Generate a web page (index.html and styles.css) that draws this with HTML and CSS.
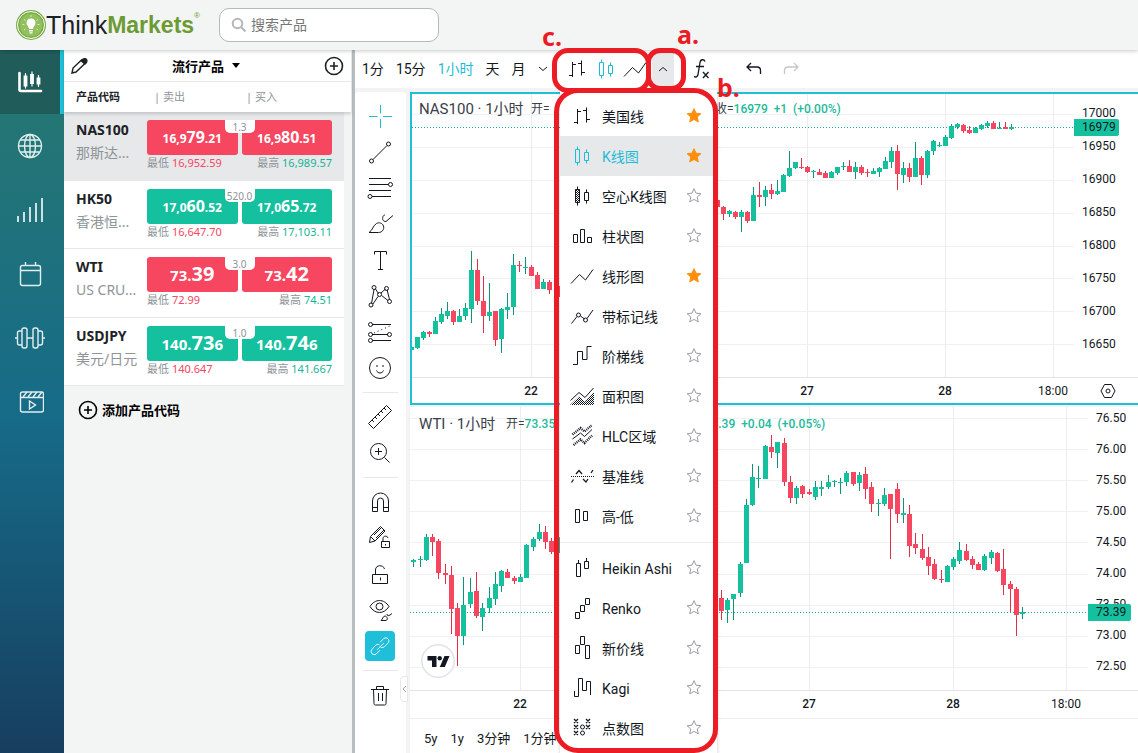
FILE: index.html
```html
<!DOCTYPE html>
<html lang="zh-CN">
<head>
<meta charset="utf-8">
<title>ThinkMarkets</title>
<link rel="stylesheet" href="styles.css">
</head>
<body>
<svg class="sprite" aria-hidden="true">
  <defs>
    <pattern id="dots" width="2" height="2" patternUnits="userSpaceOnUse"><path d="M0 0h1v1H0zM1 1h1v1H1z" fill="#131722" stroke="none"/></pattern>
  </defs>
  <symbol id="i-bars" viewBox="0 0 28 28"><path d="M9.500 7v15M6 20.500h3.500M9.500 9.500H13M18.500 5.500v15M15 8.500h3.500M18.500 17.500H22"/></symbol>
  <symbol id="i-candles" viewBox="0 0 28 28"><path d="M7.500 7.500h4v13h-4zM9.500 4.500v3M9.500 20.500v3M16.500 10.500h4v8h-4zM18.500 7.500v3M18.500 18.500v3"/></symbol>
  <symbol id="i-hollow" viewBox="0 0 28 28"><path fill="url(#dots)" d="M7.500 7.500h4v13h-4z"/><path d="M9.500 4.500v3M9.500 20.500v3M16.500 10.500h4v8h-4zM18.500 7.500v3M18.500 18.500v3"/></symbol>
  <symbol id="i-columns" viewBox="0 0 28 28"><path d="M5.500 12.500h4v8h-4zM12.500 7.500h4v13h-4zM19.500 15.500h4v5h-4z"/></symbol>
  <symbol id="i-line" viewBox="0 0 28 28"><path d="M3 21.500l8.500-9 6 5.500L25 7.500"/></symbol>
  <symbol id="i-markers" viewBox="0 0 28 28"><path d="M3.500 21.500l5.500-7M12.500 14l4 3M19 16.500l6-8.500"/><circle cx="10.500" cy="13" r="2"/><circle cx="17.500" cy="18" r="2"/></symbol>
  <symbol id="i-step" viewBox="0 0 28 28"><path d="M5 22.500h4.500v-13h5v8h4.500V4.500h4.500"/></symbol>
  <symbol id="i-area" viewBox="0 0 28 28"><path fill="url(#dots)" stroke="none" d="M2 23l9-8.500 6 5L26 10v13z"/><path d="M2.500 18.500l8.500-8 6 5 8.500-9.500"/></symbol>
  <symbol id="i-hlc" viewBox="0 0 28 28"><path d="M4.500 17l8-6 4 3.500 7.500-7"/><path stroke-width="2.400" stroke-dasharray="1 1" d="M4.500 12.500l8-6.500 4 3.500 7-6M5.500 23l7-5.500 4 3.500 7.500-7.500"/></symbol>
  <symbol id="i-base" viewBox="0 0 28 28"><path stroke-dasharray="1 1" d="M3 14.500h23"/><path stroke-width="1.300" d="M3.500 20.500l2-3M8 12l3-3.500 3 3.500M15 17l3 3 2-3M23 11l2-3"/></symbol>
  <symbol id="i-hilo" viewBox="0 0 28 28"><path d="M7.500 7.500h4v13h-4zM15.500 9.500h4v9h-4z"/></symbol>
  <symbol id="i-heikin" viewBox="0 0 28 28"><path d="M8.500 9.500h4v13h-4zM10.500 6v3.500M16.500 7.500h4v7h-4zM18.500 4v3.500"/></symbol>
  <symbol id="i-renko" viewBox="0 0 28 28"><path d="M7.500 18.500h4v6h-4zM12.500 11.500h4v6h-4zM17.500 4.500h4v6h-4z"/></symbol>
  <symbol id="i-break" viewBox="0 0 28 28"><path d="M7.500 11.500h4v8h-4zM12.500 2.500h4v8h-4zM17.500 11.500h4v13h-4z"/></symbol>
  <symbol id="i-kagi" viewBox="0 0 28 28"><path d="M6.500 17v5.500h4V4.500h4v12h4v-9h4V21"/></symbol>
  <symbol id="i-pf" viewBox="0 0 28 28"><path stroke-width="1.300" d="M6 5l4 4M10 5l-4 4M18 5l4 4M22 5l-4 4M6 11l4 4M10 11l-4 4M18 11l4 4M22 11l-4 4M6 17l4 4M10 17l-4 4"/><circle cx="14.500" cy="13" r="2"/><circle cx="14.500" cy="19" r="2"/></symbol>
  <symbol id="i-star" viewBox="0 0 18 18"><path d="M9 1.700l2 4.500 4.900.5-3.700 3.300 1.100 4.900L9 12.400l-4.300 2.500 1.100-4.900L2.100 6.700 7 6.200z"/></symbol>
  <symbol id="t-cross" viewBox="0 0 28 28"><path d="M3 14.500h8.500M17 14.500h9M14.500 3v8.500M14.500 17v9"/></symbol>
  <symbol id="t-trend" viewBox="0 0 28 28"><path d="M7 21.500L21 7.500"/><circle cx="5.500" cy="23" r="2"/><circle cx="22.500" cy="6" r="2"/></symbol>
  <symbol id="t-fib" viewBox="0 0 28 28"><path d="M3 4.500h22M3 10.500h19.500M3 16.500h22M6 22.500h19"/><circle cx="24.500" cy="10.500" r="2"/><circle cx="4" cy="22.500" r="2"/></symbol>
  <symbol id="t-brush" viewBox="0 0 28 28"><path d="M3 22.500h9.500c3.500 0 6-3 5-6.500-1-3-4.500-4-7-2.500-4 2.500-3.500 6.500-7.500 9zM17 6.500c-1 3 0 5 3 5M20 11.500l7-6M17 6.500c.5-1 1-1.500 2-1.500"/></symbol>
  <symbol id="t-text" viewBox="0 0 28 28"><path d="M8.500 8.500v-3h12v3M14.500 5.500v18M12 23.500h5"/></symbol>
  <symbol id="t-pattern" viewBox="0 0 28 28"><path d="M5.500 21.500l2.500-14M9.500 7l3 4.500M15 11l4.500-4M21 7.500l2.500 10M7 22l5-7.500M15.500 13.500l6.500 5"/><circle cx="8" cy="5.500" r="2"/><circle cx="20.500" cy="6.500" r="2"/><circle cx="13.500" cy="12.500" r="2"/><circle cx="5" cy="23" r="2"/><circle cx="23.500" cy="19.500" r="2"/></symbol>
  <symbol id="t-forecast" viewBox="0 0 28 28"><path d="M6 6.500h19M6 16.500h16M6 22.500h19"/><path stroke-dasharray="1 3" d="M8 15l16-7"/><circle cx="4.500" cy="6.500" r="2"/><circle cx="4.500" cy="16.500" r="2"/><circle cx="23.500" cy="16.500" r="2"/><circle cx="4.500" cy="22.500" r="2"/></symbol>
  <symbol id="t-smile" viewBox="0 0 28 28"><circle cx="14" cy="14" r="10.500"/><path d="M10.500 16.500c.5 1.500 2 2.500 3.500 2.500s3-1 3.500-2.500M11 11v2M17 11v2"/></symbol>
  <symbol id="t-ruler" viewBox="0 0 28 28"><path d="M2.500 20.500l18-18 5 5-18 18zM6 17l2 2M9 14l2 2M12 11l2 2M15 8l2 2M18 5l2 2"/></symbol>
  <symbol id="t-zoom" viewBox="0 0 28 28"><circle cx="12.500" cy="12.500" r="8"/><path d="M18.500 18.500l5 5M12.500 9v7M9 12.500h7"/></symbol>
  <symbol id="t-magnet" viewBox="0 0 28 28"><path d="M6.500 23.500V13a8 8 0 0 1 16 0v10.500h-5V13a3 3 0 0 0-6 0v10.500zM6.500 19.500h5M17.500 19.500h5"/></symbol>
  <symbol id="t-penlock" viewBox="0 0 28 28"><path d="M3.500 18.500l1-6 10-10 4.500 4.500-10 10zM5 13l4 4M8 11l7.500-7.500M10 14l8-8M15.500 17.500h8v6h-8zM17 17v-2.500c0-3 4.500-3 5-.5M19.500 20v1.500"/></symbol>
  <symbol id="t-lock" viewBox="0 0 28 28"><path d="M6.500 14.500h15v9h-15zM9.500 14.500V10c0-5.500 8-5.500 9-1M14.500 17.500v3"/></symbol>
  <symbol id="t-eye" viewBox="0 0 28 28"><path d="M4 10.500c5-8 14-8 19 0-5 8-14 8-19 0zM15 24.500h5c2.500-1 1-4.500-1-4.500-2.500.5-2 3-4 4.500zM21 18c0 2 1.500 2 3 1l2-1.500"/><circle cx="13.500" cy="10.500" r="3.500"/></symbol>
  <symbol id="t-link" viewBox="0 0 28 28"><path d="M11 18l7-7M14 10l4-4c3.500-2.500 7 1.500 5 4.500l-4.500 4.500c-1.500 1-3 1-4 0M14 18.500l-4 4c-3.500 2.500-7-1.500-5-4.500L9.500 13c1.500-1 3-1 4 0"/></symbol>
  <symbol id="t-trash" viewBox="0 0 28 28"><path d="M5 8.500h18M10.500 8.500v-3h7v3M7.500 8.500l.5 14c0 1 .5 1.500 1.500 1.500h9c1 0 1.500-.5 1.500-1.500l.5-14M12.500 12v8M16.500 12v8"/></symbol>
</svg>

<header class="top">
  <div class="logo">
    <svg class="logo-mark" viewBox="0 0 30 30"><circle cx="15" cy="15" r="15" fill="#79ab43"/><circle cx="15" cy="15" r="13.500" fill="none" stroke="#fff" stroke-width="1"/><circle cx="15" cy="15" r="11.500" fill="#92c05d"/><path d="M15 8.500c-3 0-4.500 2-4.500 4.500s2.300 3.500 2.500 6h4c.2-2.500 2.500-3.500 2.500-6S18 8.500 15 8.500zM13 20h4v1.500h-4zM13.500 22.200h3v1.300h-3z" fill="#fff"/><path d="M8 9.500l1.500 1M6.500 14.500h2M8 20l1.500-1M22 9.500l-1.500 1M23.500 14.500h-2M22 20l-1.500-1M15 5v2" stroke="#d8eabf"/></svg>
    <span class="logo-think">Think</span><span class="logo-markets">Markets</span><span class="logo-reg">®</span>
  </div>
  <label class="search">
    <svg viewBox="0 0 16 16" class="search-icon"><circle cx="6.500" cy="6.500" r="4.800"/><path d="M10.200 10.200l4.300 4.300"/></svg>
    <input type="text" placeholder="搜索产品" aria-label="搜索产品">
  </label>
</header>

<div class="app">
  <nav class="rail">
    <a href="#" class="rail-item active" aria-label="交易"><svg viewBox="0 0 28 28"><path stroke-width="2.600" stroke-linecap="round" d="M3.500 5v16.500a1.500 1.500 0 0 0 1.500 1.500h20"/><path stroke-width="3.800" d="M9.500 7.500v11M16 6v10M22.500 9.500v7"/><path stroke-width="1.200" d="M9.500 5v15.500M16 3.500v15M22.500 7v12"/></svg></a>
    <a href="#" class="rail-item" aria-label="市场"><svg viewBox="0 0 28 28"><circle cx="14" cy="14" r="11.500"/><ellipse cx="14" cy="14" rx="5.500" ry="11.500"/><path d="M2.500 14h23M4.500 8h19M4.500 20h19M14 2.500v23"/></svg></a>
    <a href="#" class="rail-item" aria-label="信号"><svg viewBox="0 0 28 28"><path stroke-width="1.800" d="M2 20v6M8 16v10M14 11v15M20 7v19M26 2v24"/></svg></a>
    <a href="#" class="rail-item" aria-label="日历"><svg viewBox="0 0 28 28"><rect x="4.500" y="5.500" width="20" height="20" rx="2"/><path d="M4.500 10.500h20M9.500 2v3.500M19.500 2v3.500"/></svg></a>
    <a href="#" class="rail-item" aria-label="训练"><svg class="wide" viewBox="0 0 30 28"><rect x="7" y="4" width="5" height="20" rx="2"/><rect x="18" y="4" width="5" height="20" rx="2"/><path d="M12 14h6M7 7H4.500C3 7 2.500 8 2.500 9v10c0 1 .5 2 2 2H7M23 7h2.500c1.500 0 2 1 2 2v10c0 1-.5 2-2 2H23M0 14h2.500M27.500 14H30"/></svg></a>
    <a href="#" class="rail-item" aria-label="视频"><svg viewBox="0 0 28 28"><rect x="4.500" y="4" width="23" height="20" rx="2"/><path d="M4.500 9.500h23M7 9l4-5M12 9l4-5M17 9l4-5M22 9l4-5M13.500 13v8l6-4z"/></svg></a>
  </nav>

  <aside class="watch">
    <div class="watch-head">
      <div class="watch-title">
        <button aria-label="编辑"><svg viewBox="0 0 18 18" class="pencil"><path d="M2 16l1-5L11.500 3l3.500 3.500-9 8.500z"/><path fill="#1c2226" d="M11.500 4c1-2.500 4-3 5-1.500s0 3.500-1.500 4.500z"/></svg></button>
        <button class="list-name">流行产品<span class="caret"></span></button>
        <button aria-label="添加"><svg viewBox="0 0 20 20" class="plus"><circle cx="10" cy="10" r="8.500"/><path d="M10 6v8M6 10h8"/></svg></button>
      </div>
      <div class="watch-cols"><strong>产品代码</strong><span>| 卖出</span><span>| 买入</span></div>
    </div>
    <ul class="quotes">
      <li class="quote sel">
        <div class="sym"><b>NAS100</b><span>那斯达...</span></div>
        <div class="deal down">
          <button>16,9<big>79</big>.21</button><button>16,9<big>80</big>.51</button><i>1.3</i>
          <small>最低 <em class="r">16,952.59</em></small><small>最高 <em class="g">16,989.57</em></small>
        </div>
      </li>
      <li class="quote">
        <div class="sym"><b>HK50</b><span>香港恒...</span></div>
        <div class="deal up">
          <button>17,0<big>60</big>.52</button><button>17,0<big>65</big>.72</button><i>520.0</i>
          <small>最低 <em class="r">16,647.70</em></small><small>最高 <em class="g">17,103.11</em></small>
        </div>
      </li>
      <li class="quote">
        <div class="sym"><b>WTI</b><span>US CRU...</span></div>
        <div class="deal down large">
          <button>73.<big>39</big></button><button>73.<big>42</big></button><i>3.0</i>
          <small>最低 <em class="r">72.99</em></small><small>最高 <em class="g">74.51</em></small>
        </div>
      </li>
      <li class="quote">
        <div class="sym"><b>USDJPY</b><span>美元/日元</span></div>
        <div class="deal up large">
          <button>140.<big>73</big>6</button><button>140.<big>74</big>6</button><i>1.0</i>
          <small>最低 <em class="r">140.647</em></small><small>最高 <em class="g">141.667</em></small>
        </div>
      </li>
    </ul>
    <button class="add"><svg viewBox="0 0 20 20" class="plus"><circle cx="10" cy="10" r="8.500"/><path d="M10 6v8M6 10h8"/></svg>添加产品代码</button>
  </aside>

  <main class="work">
    <div class="bar">
      <button class="p">1分</button><button class="p">15分</button><button class="p on">1小时</button><button class="p">天</button><button class="p">月</button>
      <button class="more" aria-label="更多周期"><svg viewBox="0 0 10 6"><path d="M1 1l4 3.500L9 1"/></svg></button>
      <button class="ic" aria-label="美国线"><svg class="ico"><use href="#i-bars"/></svg></button>
      <button class="ic on" aria-label="K线图"><svg class="ico"><use href="#i-candles"/></svg></button>
      <button class="ic" aria-label="线形图"><svg class="ico"><use href="#i-line"/></svg></button>
      <button class="open" aria-label="图表类型"><svg viewBox="0 0 10 6"><path d="M1 5l4-3.500L9 5"/></svg></button>
      <button class="fx" aria-label="指标"><svg viewBox="0 0 28 28" class="ico"><path stroke-width="1.300" d="M17 6.500c-1-2.500-4.500-2.500-5 1l-2 12c-.5 2.500-2.500 3-4 2M8 11.500h8M15 17l5.500 6M20.500 17L15 23"/></svg></button>
      <button class="undo" aria-label="撤销"><svg viewBox="0 0 28 28" class="ico"><path stroke-width="1.300" d="M11 8l-4 4 4 4M7.500 12H17c2 0 3.500 1.500 3.500 3.500V19"/></svg></button>
      <button class="redo" aria-label="重做"><svg viewBox="0 0 28 28" class="ico"><path stroke-width="1.300" d="M17 8l4 4-4 4M20.500 12H11c-2 0-3.500 1.500-3.500 3.500V19"/></svg></button>
    </div>
    <div class="body">
      <div class="tools" id="tools"></div>
      <div class="charts">
        <section class="chart chart-a">
          <div class="legend"><span class="name">NAS100 · <span>1小时</span></span><span class="ohlc">开=</span><span>收=<b>16979&nbsp; +1 &nbsp;(+0.00%)</b></span></div>
          <svg class="pane" id="paneA"></svg>
          <div class="prices"><span>17000</span><span>16950</span><span>16900</span><span>16850</span><span>16800</span><span>16750</span><span>16700</span><span>16650</span><mark>16979</mark></div>
          <svg class="times" id="timesA"></svg>
          <button class="gear" aria-label="设置"><svg viewBox="0 0 16 16"><path d="M4.500 1.500h7l3.500 6.500-3.500 6.500h-7L1 8z"/><circle cx="8" cy="8" r="2"/></svg></button>
        </section>
        <section class="chart chart-b">
          <div class="legend"><span class="name">WTI · <span>1小时</span></span><span class="ohlc">开=<b>73.35</b></span><span>收=<b>73.39&nbsp; +0.04 &nbsp;(+0.05%)</b></span></div>
          <svg class="pane" id="paneB"></svg>
          <div class="prices"><span>76.50</span><span>76.00</span><span>75.50</span><span>75.00</span><span>74.50</span><span>74.00</span><span>73.50</span><span>73.00</span><span>72.50</span><mark>73.39</mark></div>
          <svg class="times" id="timesB"></svg>
          <svg class="tv" viewBox="0 0 34 34"><circle cx="17" cy="17" r="16.200" fill="#fff" stroke="#e0e3eb" stroke-width="1.500"/><path fill="#131722" d="M6.500 12h9v11h-4.500v-6.500H6.500zM23.500 12h5l-4.700 11h-5z"/><circle cx="18.700" cy="14.200" r="2.200" fill="#131722"/></svg>
        </section>
        <div class="ranges"><button>5y</button><button>1y</button><button>3分钟</button><button>1分钟</button></div>
        <button class="fold" aria-label="收起"><svg viewBox="0 0 5 8"><path d="M4 1L1 4l3 3"/></svg></button>
      </div>
    </div>
    <div class="menu" id="menu"></div>
  </main>
</div>

<div class="note note-c"></div><div class="note note-a"></div><div class="note note-b"></div>
<span class="tag tag-c">c.</span><span class="tag tag-a">a.</span><span class="tag tag-b">b.</span>
<script src="app.js"></script>
</body>
</html>
```
FILE: styles.css
```css
* { box-sizing: border-box; }
body { margin: 0; height: 100vh; display: flex; flex-direction: column; overflow: hidden; position: relative; background: #f3f5f4; color: #1c2226; font: 14px/20px "Noto Sans", "Noto Sans CJK SC", sans-serif; }
button { margin: 0; padding: 0; border: 0; background: none; color: inherit; font: inherit; cursor: pointer; }
svg { display: block; fill: none; stroke: currentColor; }
.sprite { position: absolute; width: 0; height: 0; }
.ico { width: 28px; height: 28px; flex: none; }

.top { height: 50px; flex: none; display: flex; align-items: center; padding-left: 16px; gap: 20px; box-shadow: 0 1px 4px rgba(0,0,0,.22); position: relative; z-index: 3; background: #f3f5f4; }
.logo { display: flex; align-items: center; width: 183px; font: 25px/30px "Liberation Sans", Arial, sans-serif; color: #1b2025; }
.logo-mark { width: 30px; height: 30px; stroke: none; flex: none; }
.logo-markets { font-weight: 700; font-size: 23px; color: #6c9a33; }
.logo-reg { align-self: flex-start; font-size: 8px; line-height: 12px; color: #6c9a33; }
.search { display: flex; align-items: center; gap: 2px; width: 220px; height: 34px; padding-left: 11px; border: 1px solid #b4b9ba; border-radius: 10px; background: #fff; }
.search-icon { width: 16px; height: 16px; color: #b4b8ba; stroke-width: 2; flex: none; }
.search input { flex: 1; min-width: 0; border: 0; outline: 0; background: none; font: inherit; }
.search input::placeholder { color: #777; opacity: 1; }

.app { flex: 1; min-height: 0; display: flex; }
.rail { width: 64px; flex: none; background: linear-gradient(#247674 64px, #166b88 370px, #173e5f); }
.rail-item { display: flex; align-items: center; justify-content: center; height: 64px; border-right: 4px solid transparent; color: #e2eeee; }
.rail-item svg { width: 28px; height: 28px; stroke-width: 1.4; }
.rail-item .wide { width: 30px; }
.rail-item.active { background: #205c59; border-color: #1fc0d9; color: #fff; }

.watch { width: 291px; flex: none; padding-right: 1px; border-right: 3px solid #b8bdc0; }
.watch-head { height: 62px; background: #fff; box-shadow: 0 2px 3px rgba(0,0,0,.16); position: relative; }
.watch-title { height: 32px; display: flex; align-items: center; justify-content: space-between; padding: 0 7px 0 6px; border-bottom: 1px solid #e6e8e9; }
.pencil { width: 18px; height: 18px; stroke-width: 1.4; }
.plus { width: 20px; height: 20px; stroke-width: 1.6; flex: none; }
.list-name { display: flex; align-items: center; gap: 8px; color: #000; font-size: 13px; font-weight: 700; }
.caret { border: 4px solid transparent; border-top: 5px solid #000; border-bottom: 0; }
.watch-cols { display: grid; grid-template-columns: 78px 92px 1fr; padding: 5px 0 0 12px; font-size: 11px; color: #8e9498; }
.watch-cols strong { color: #1c2226; }
.quotes { list-style: none; margin: 0; padding: 0; width: 280px; }
.quote { height: 69px; display: flex; padding: 8px 12px 0; background: #fff; border-bottom: 1px solid #e6e8e9; }
.quote:nth-child(even) { height: 68px; }
.quote.sel { background: #e6e8ea; }
.sym { width: 71px; flex: none; white-space: nowrap; display: flex; flex-direction: column; gap: 4px; }
.sym span { color: #8e9498; line-height: 18px; }
.deal { flex: 1; position: relative; display: grid; grid-template-columns: 1fr 1fr; column-gap: 4px; align-content: start; }
.deal button { height: 35px; border-radius: 3px; color: #fff; font-weight: 700; font-size: 12px; line-height: 20px; }
.deal big { font-size: 16px; }
.deal.large button { font-size: 15px; }
.deal.large big { font-size: 20px; }
.down button { background: #f7465f; }
.up button { background: #15c09f; }
.deal i { position: absolute; left: 50%; top: 0; transform: translateX(-50%); width: 30px; height: 13px; border-radius: 0 0 5px 5px; background: #fff; color: #8e9498; font: 10px/14px "Noto Sans", sans-serif; text-align: center; }
.deal small { font-size: 11px; line-height: 16px; color: #8e9498; white-space: nowrap; }
.deal small:last-child { text-align: right; }
.deal em { font-style: normal; }
.r { color: #f7465f; }
.g { color: #15b598; }
.add { display: flex; align-items: center; gap: 4px; margin: 14px 0 0 14px; color: #000; font-size: 13px; font-weight: 700; }

.work { flex: 1; min-width: 0; display: flex; flex-direction: column; position: relative; font-family: Roboto, "Noto Sans CJK SC", sans-serif; color: #131722; background: #f3f3f3; }
.bar { height: 38px; flex: none; display: flex; align-items: center; padding-left: 7px; background: #fff; }
.bar .p { margin-right: 12px; white-space: nowrap; }
.bar .on { color: #1fbcd6; }
.more svg, .open svg { width: 10px; height: 6px; }
.more { margin: 0 15px 0 0; }
.bar .ic { width: 29px; }
.open { width: 22px; height: 36px; margin-left: 2px; display: flex; align-items: center; justify-content: center; background: #e6e8ea; }
.fx { margin-left: 14px; }
.undo { margin-left: 24px; }
.redo { margin-left: 9px; color: #c4c7cc; }
.body { flex: 1; min-height: 0; display: flex; gap: 4px; padding-top: 4px; }
.tools { width: 51px; flex: none; padding: 6px 2px 0 0; background: #fff; border-radius: 4px 4px 0 0; }
.tool { width: 100%; height: 36px; display: flex; align-items: center; justify-content: center; }
.tool.cross { color: #1fbcd6; }
.tool.link .ico { width: 30px; height: 30px; padding: 2px; border-radius: 4px; background: #1fbfd9; color: #fff; }
.tools hr { height: 1px; margin: 6px 6px 6px 8px; border: 0; background: #e6e8e9; }
.charts { flex: 1; min-width: 0; display: flex; flex-direction: column; position: relative; }
.chart { position: relative; display: grid; overflow: hidden; background: #fff; }
.chart-a { height: 313px; grid-template: 1fr 25px / 1fr 64px; border: 2px solid #1fbfd9; border-right: 0; margin-bottom: 2px; }
.chart-b { height: 311px; grid-template: 1fr 27px / 1fr 50px; }
.pane { width: 100%; height: 100%; border-bottom: 1px solid #e0e3eb; stroke: none; overflow: hidden; }
.times { width: 100%; height: 25px; stroke: none; overflow: visible; }
.times text { fill: #131722; font: 12px Roboto, sans-serif; text-anchor: middle; }
.times .day { font-weight: 500; }
.legend { position: absolute; left: 7px; top: 4px; display: flex; font-size: 12px; line-height: 22px; white-space: nowrap; color: #3a3e49; }
.chart-b .legend { left: 9px; top: 6px; }
.legend b { font-weight: 500; color: #22b99c; }
.legend .name { width: 112px; font-size: 15px; }
.legend .ohlc { width: 184px; }
.chart-b .legend .name { width: 87px; }
.chart-b .legend .ohlc { width: 180px; }
.prices { position: relative; border-bottom: 1px solid #e0e3eb; padding: 3px 0 0 8px; display: flex; flex-direction: column; font-size: 12px; line-height: 33px; }
.chart-b .prices { line-height: 31px; padding-top: 0; margin-top: -4px; }
.prices mark { position: absolute; left: 0; top: 25px; width: 45px; padding-left: 8px; line-height: 17px; border-radius: 0 2px 2px 0; background: #15c09f; color: #0c1a1c; }
.chart-b .prices mark { top: 201px; width: 43px; }
.gear { display: flex; align-items: center; justify-content: center; padding-left: 4px; }
.gear svg { width: 16px; height: 16px; }
.tv { position: absolute; left: 11px; top: 237px; width: 34px; height: 34px; stroke: none; }
.ranges { flex: 1; border-top: 1px solid #eceeef; background: #fff; display: flex; align-items: center; gap: 13px; padding: 6px 0 0 14px; font-size: 13px; }
.fold { position: absolute; left: -10px; top: 584px; width: 8px; height: 26px; display: flex; align-items: center; justify-content: center; background: #fff; border: 1px solid #e6e8e9; border-radius: 4px 0 0 4px; color: #9aa9b0; }
.fold svg { width: 5px; height: 8px; }

.menu { position: absolute; left: 205px; top: 40px; width: 157px; height: 670px; padding-top: 6px; background: #fff; box-shadow: 0 2px 4px rgba(0,0,0,.2); z-index: 2; }
.item { height: 40px; display: flex; align-items: center; width: 100%; padding: 0 14px 0 8px; text-align: left; }
.item.on { background: #e6e8ea; color: #1fbcd6; }
.item span { flex: 1; padding: 2px 0 0 6px; white-space: nowrap; }
.star { width: 18px; height: 18px; color: #9a9ea5; flex: none; }
.star.fav { fill: #ff8f0a; color: #ff8f0a; }
.menu hr { height: 1px; margin: 6px 0 5px; border: 0; background: #e8eaec; }

.note { position: absolute; z-index: 5; border: 5px solid #ec1c24; pointer-events: none; }
.note-c { left: 552px; top: 48px; width: 99px; height: 45px; border-radius: 16px; }
.note-a { left: 646px; top: 48px; width: 40px; height: 43px; border-radius: 14px; }
.note-b { left: 554px; top: 88px; width: 164px; height: 665px; border-radius: 24px; }
.tag { position: absolute; z-index: 6; color: #ec1c24; font: 700 25px/24px "Noto Sans", sans-serif; }
.tag-c { left: 542px; top: 24px; }
.tag-a { left: 677px; top: 22px; }
.tag-b { left: 717px; top: 75px; }
```
FILE: app.js
```js
const icons = [
  ['i-bars', '美国线', 1], ['i-candles', 'K线图', 1], ['i-hollow', '空心K线图'], ['i-columns', '柱状图'],
  ['i-line', '线形图', 1], ['i-markers', '带标记线'], ['i-step', '阶梯线'], ['i-area', '面积图'],
  ['i-hlc', 'HLC区域'], ['i-base', '基准线'], ['i-hilo', '高-低'], null,
  ['i-heikin', 'Heikin Ashi'], ['i-renko', 'Renko'], ['i-break', '新价线'], ['i-kagi', 'Kagi'], ['i-pf', '点数图']
];
document.getElementById('menu').innerHTML = icons.map(i => i
  ? `<button class="item${i[0] === 'i-candles' ? ' on' : ''}"><svg class="ico"><use href="#${i[0]}"/></svg><span>${i[1]}</span><svg class="star${i[2] ? ' fav' : ''}"><use href="#i-star"/></svg></button>`
  : '<hr>').join('');

document.getElementById('tools').innerHTML =
  'cross trend fib brush text pattern forecast smile | ruler zoom | magnet penlock lock eye link | trash'
    .split(' ').map(t => t === '|' ? '<hr>' : `<button class="tool ${t}" aria-label="${t}"><svg class="ico"><use href="#t-${t}"/></svg></button>`).join('');

// Candle: x, body top, body bottom, wick top, wick bottom, direction
const nas = `411 347 350 347 350 g;417 337 348 337 349 g;423 332 338 331 340 g;429 332 334 331 337 r;435 321 334 317 334 g;441 314 322 308 324 g;447 311 316 302 319 g;453 311 322 310 325 r;459 316 322 309 322 g;465 308 316 303 320 g;471 270 309 251 323 g;477 270 301 259 305 r;483 301 316 276 333 r;489 312 316 283 321 g;495 311 340 311 346 r;501 309 339 308 353 g;507 307 310 293 319 g;513 265 307 254 315 g;519 265 266 261 272 r;525 267 268 257 274 g;531 267 276 265 276 r;537 275 289 272 289 r;543 282 289 279 289 g;549 282 290 280 294 r;561 286 297 286 297 r;717 200 207 200 207 r;723 207 214 206 220 r;729 211 214 210 217 g;735 212 217 211 219 r;741 212 217 210 232 g;747 212 221 211 223 r;753 195 221 187 221 g;759 195 197 182 207 r;765 190 197 186 206 g;771 190 194 184 199 r;777 191 194 180 195 g;783 175 192 174 192 g;789 168 176 151 177 g;795 162 168 162 169 g;801 167 168 158 169 r;807 167 172 166 173 r;813 171 172 170 178 g;819 172 175 169 175 r;825 173 178 171 178 r;831 172 178 171 178 g;837 167 173 167 175 g;843 166 167 162 170 g;849 166 172 160 172 r;855 167 172 162 179 g;861 167 173 165 175 r;867 172 173 169 177 r;873 171 174 168 174 g;879 168 172 167 177 g;885 161 169 157 169 g;891 151 162 147 168 g;897 151 174 145 190 r;903 168 175 162 183 g;909 168 177 163 182 r;915 158 177 142 177 g;921 158 175 156 185 r;927 151 175 150 178 g;933 141 151 140 155 g;939 145 146 142 147 g;945 137 146 135 146 g;951 126 138 124 139 g;957 124 127 123 129 g;963 125 131 124 133 r;969 130 133 126 134 r;975 128 133 127 133 g;981 125 129 124 130 g;987 123 126 121 128 g;993 123 129 121 129 r;999 128 129 122 129 g;1005 127 129 122 129 r;1011 127 129 124 130 g`;
const wti = `413 560 562 559 567 g;420 559 560 556 567 g;426 537 560 534 561 g;432 537 542 534 556 r;438 541 573 539 579 r;445 573 575 564 584 r;451 575 609 566 634 r;457 608 636 603 666 r;463 605 636 577 645 g;470 592 604 578 608 g;476 591 616 572 618 r;482 608 617 603 631 g;489 598 608 587 613 g;495 584 599 572 605 g;501 571 586 570 592 g;507 572 578 569 578 r;514 578 581 576 584 r;520 577 582 574 582 g;526 545 578 544 578 g;533 539 547 537 551 g;539 532 539 524 541 g;545 532 542 526 549 r;551 541 552 538 554 r;558 537 553 535 553 g;721 598 611 590 620 r;727 600 610 598 623 g;733 594 599 594 620 g;740 564 593 562 597 g;746 505 563 499 563 g;752 477 505 464 506 g;758 478 479 466 488 g;765 446 479 445 479 g;771 447 452 435 458 r;777 442 453 442 468 g;784 443 482 438 486 r;790 482 498 476 503 r;796 488 498 486 504 g;802 486 494 485 498 r;809 492 494 489 495 r;815 487 497 481 500 g;821 487 489 481 496 g;828 482 487 475 489 g;834 481 482 480 487 g;840 482 483 478 494 g;846 473 482 471 486 g;853 472 484 472 486 r;859 475 483 472 491 g;865 474 489 467 499 r;871 487 504 482 512 r;878 503 504 499 516 g;884 495 504 488 506 g;890 494 509 494 559 r;897 489 514 483 523 r;903 513 515 498 523 g;909 514 546 505 557 r;915 544 548 533 554 r;922 549 558 534 560 r;928 557 566 547 575 r;934 564 579 559 580 r;941 579 580 570 583 r;947 566 582 565 582 g;953 559 567 557 570 g;959 550 561 542 564 g;966 551 560 544 561 r;972 559 565 556 569 r;978 564 570 562 570 r;984 556 570 554 571 g;991 552 558 550 564 g;997 553 571 552 572 r;1003 569 585 549 595 r;1010 584 589 581 612 r;1016 589 615 587 636 r;1022 612 614 607 619 g`;

function draw(id, data, ox, oy, rows, cols, last) {
  let s = '';
  rows.forEach(y => { s += `<rect x="0" y="${y - oy}" width="100%" height="1" fill="#f0f1f2"/>`; });
  cols.forEach(c => { s += `<rect x="${c[0] - ox}" y="0" width="1" height="100%" fill="#ecedef"/>`; });
  const y = last - oy + 0.5;
  s += `<line x1="0" x2="100%" y1="${y}" y2="${y}" stroke="#15a68b" stroke-dasharray="1 2"/>`;
  data.split(';').forEach(row => {
    const [x, a, b, h, l, d] = row.split(' ');
    const up = d === 'g';
    s += `<rect x="${x - ox}" y="${h - oy}" width="1" height="${l - h}" fill="${up ? '#0b9479' : '#e02f49'}"/>`;
    s += `<rect x="${x - ox - 2}" y="${a - oy}" width="5" height="${Math.max(1, b - a)}" fill="${up ? '#15c09f' : '#f7465f'}"/>`;
  });
  document.getElementById('pane' + id).innerHTML = s;
  document.getElementById('times' + id).innerHTML = cols.map(c =>
    `<text x="${c[0] - ox}" y="17"${c[1].length < 3 ? ' class="day"' : ''}>${c[1]}</text>`).join('');
}
draw('A', nas, 412, 94, [114, 147, 180, 213, 246, 278, 311, 344], [[531, '22'], [807, '27'], [945, '28'], [1053, '18:00']], 127);
draw('B', wti, 410, 407, [418, 449, 480, 511, 542, 574, 605, 636, 667], [[520, '22'], [809, '27'], [953, '28'], [1066, '18:00']], 612);
```
